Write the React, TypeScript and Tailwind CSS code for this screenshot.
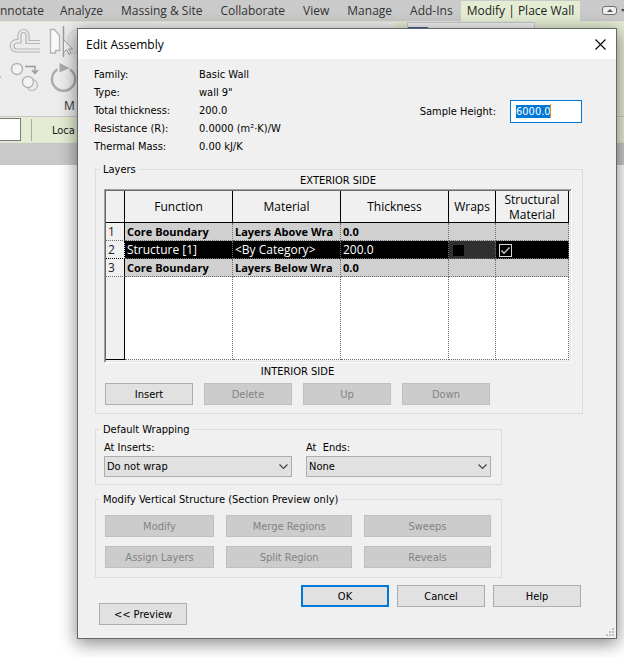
import { useEffect, useRef } from "react";
import type { ReactNode } from "react";

const tabs = ["Analyze", "Massing & Site", "Collaborate", "View", "Manage", "Add-Ins"];

const properties = [
  ["Family:", "Basic Wall"],
  ["Type:", 'wall 9"'],
  ["Total thickness:", "200.0"],
  ["Resistance (R):", "0.0000 (m²·K)/W"],
  ["Thermal Mass:", "0.00 kJ/K"],
];

const layers = [
  { id: 1, fn: "Core Boundary", material: "Layers Above Wra", thickness: "0.0", active: false },
  { id: 2, fn: "Structure [1]", material: "<By Category>", thickness: "200.0", active: true },
  { id: 3, fn: "Core Boundary", material: "Layers Below Wra", thickness: "0.0", active: false },
];

function Button({
  children,
  disabled = false,
  primary = false,
  wide = false,
}: {
  children: ReactNode;
  disabled?: boolean;
  primary?: boolean;
  wide?: boolean;
}) {
  const tone = disabled
    ? "border border-[#bfbfbf] bg-[#cccccc] text-[#838383]"
    : primary
      ? "border-2 border-[#0078d7] bg-[#e1e1e1]"
      : "border border-[#adadad] bg-[#e1e1e1]";
  return (
    <button
      type="button"
      disabled={disabled}
      className={`flex h-[22px] items-center justify-center ${wide ? "w-full" : "w-[88px]"} ${tone}`}
    >
      {children}
    </button>
  );
}

function Group({ title, className, children }: { title: string; className: string; children: ReactNode }) {
  return (
    <fieldset className={`min-w-0 border border-[#dcdcdc] pr-[10px] pl-2 ${className}`}>
      <legend className="-ml-1 px-[3px] leading-[11px]">{title}</legend>
      {children}
    </fieldset>
  );
}

function Select({ id, label, value }: { id: string; label: string; value: string }) {
  return (
    <div>
      <label htmlFor={id} className="block leading-[13px] whitespace-pre">
        {label}
      </label>
      <div className="relative mt-0.5">
        <select
          id={id}
          defaultValue={value}
          className="block h-[21px] w-full appearance-none border border-[#adadad] bg-[#e1e1e1] pl-0.5"
        >
          <option>{value}</option>
        </select>
        <svg className="pointer-events-none absolute top-2 right-1" width="9" height="6" viewBox="0 0 9 6" fill="none">
          <path d="M.5.5 4.5 4.5 8.500.5" stroke="#444" strokeWidth="1.200" />
        </svg>
      </div>
    </div>
  );
}

function RibbonIcons() {
  return (
    <svg className="block" width="78" height="76" viewBox="0 22 78 76" fill="none" stroke="#b4b4b4">
      {/* offset */}
      <path
        d="M40 40.500H29V35a5.500 5.500 0 0 0-11 0v4.500h-1.500a6.200 6.200 0 0 0 0 12.500H40"
        strokeWidth="1.200"
      />
      <path d="M40 43.500H26V35a2.500 2.500 0 0 0-5 0v8h-4a3 3 0 0 0 0 6H40" strokeWidth="1.200" />
      {/* mirror, pick axis */}
      <path d="M50.500 29.500h4l5 6v15h-4v2.500h-5z" fill="#f8f8f8" strokeWidth="1.300" />
      <path d="M63.500 26v31" stroke="#9c9c9c" strokeWidth="1.500" />
      <path d="M78 30h-4l-6 6v13h4v4h6" stroke="#d4d4d4" fill="#e6e6e6" />
      <path d="M63.500 39.500v13l3-3 2.500 5 2-1-2.500-4.500h4z" fill="#f4f4f4" stroke="#a0a0a0" />
      {/* copy */}
      <circle cx="17" cy="69" r="5.500" fill="#f3f3f3" strokeWidth="1.400" />
      <path d="M25 66.500h10V72M32 70l3 3.500 3-3.500" stroke="#999" strokeWidth="1.400" />
      <circle cx="32" cy="85" r="5.500" strokeWidth="1.200" />
      <circle cx="28" cy="82" r="5.500" fill="#f3f3f3" strokeWidth="1.400" />
      {/* rotate */}
      <path d="M70 69.500A11.600 11.600 0 1 1 57.500 69.300" stroke="#ababab" strokeWidth="2.400" />
      <path d="M59.500 63v9.500L69.500 68z" fill="#ababab" stroke="none" />
      <path d="M0 78l1-2" />
    </svg>
  );
}

function LayerTable() {
  const head = "border-r border-b border-black px-0 text-center font-normal leading-[15px]";
  const cell = "overflow-hidden border-r border-b border-dotted border-[#6b6b6b] p-0 pl-0.5 whitespace-nowrap leading-4";
  return (
    <div className="border border-t-[#a0a0a0] border-r-white border-b-white border-l-[#a0a0a0]">
      <div className="border border-t-[#696969] border-r-[#e3e3e3] border-b-[#e3e3e3] border-l-[#696969] pr-px pb-px">
        <table className="w-full table-fixed border-separate border-spacing-0 font-['Open_Sans','Noto_Sans',sans-serif] text-[12px]">
          <colgroup>
            <col className="w-[19px]" />
            <col />
            <col />
            <col />
            <col className="w-[47px]" />
            <col className="w-[73px]" />
          </colgroup>
          <thead>
            <tr className="h-8">
              <th className={head} aria-label="Layer" />
              <th className={head}>Function</th>
              <th className={head}>Material</th>
              <th className={head}>Thickness</th>
              <th className={head}>Wraps</th>
              <th className={head}>Structural Material</th>
            </tr>
          </thead>
          <tbody>
            {layers.map(({ id, fn, material, thickness, active }) => (
              <tr
                key={id}
                className={active ? "h-[18px] bg-black text-white" : "h-[18px] bg-[#d0d0d0] text-[11px] font-bold"}
              >
                <th
                  scope="row"
                  className={`border-r border-b bg-[#f0f0f0] p-0 pl-0.5 text-left text-[12px] leading-4 font-normal text-[#222] ${
                    active ? "border-dotted border-black" : "border-r-black border-b-[#6b6b6b] [border-bottom-style:dotted]"
                  }`}
                >
                  {id}
                </th>
                <td className={cell}>{fn}</td>
                <td className={cell}>{material}</td>
                <td className={cell}>{thickness}</td>
                <td className={`${cell} ${active ? "bg-[#303030]" : ""}`}>
                  {active && (
                    <input
                      type="checkbox"
                      aria-label="Wraps"
                      disabled
                      className="mt-0.5 ml-0.5 block size-[11px] appearance-none bg-black"
                    />
                  )}
                </td>
                <td className={cell}>
                  {active && (
                    <span className="relative mt-0.5 ml-px block size-[13px]">
                      <input
                        type="checkbox"
                        aria-label="Structural material"
                        defaultChecked
                        className="block size-[13px] appearance-none border border-[#d8d8d8] bg-black"
                      />
                      <svg className="pointer-events-none absolute inset-0" width="13" height="13" viewBox="0 0 13 13" fill="none">
                        <path d="M2.500 6.500 5 9.300 10.500 3.500" stroke="#c8c8c8" strokeWidth="1.400" />
                      </svg>
                    </span>
                  )}
                </td>
              </tr>
            ))}
            <tr className="h-[83px] bg-white">
              <td className="border-r border-b border-black bg-[#f0f0f0]" />
              <td className={cell} />
              <td className={cell} />
              <td className={cell} />
              <td className={cell} />
              <td className={cell} />
            </tr>
          </tbody>
        </table>
      </div>
    </div>
  );
}

function Dialog() {
  const height = useRef<HTMLInputElement>(null);
  useEffect(() => {
    height.current?.focus();
    height.current?.select();
  }, []);

  return (
    <section
      role="dialog"
      aria-labelledby="dialog-title"
      className="absolute top-7 right-[7px] left-[77px] border border-[#666666] bg-[#f0f0f0] font-['DejaVu_Sans_Condensed','DejaVu_Sans',sans-serif] text-[11px] leading-[13px] text-black shadow-[0_4px_16px_1px_rgba(0,0,0,0.45)]"
    >
      <header className="flex h-[30px] items-center justify-between bg-white pr-2.5 pl-2">
        <h1 id="dialog-title" className="font-['Open_Sans','Noto_Sans',sans-serif] text-[12px]">
          Edit Assembly
        </h1>
        <button type="button" aria-label="Close" className="block">
          <svg width="11" height="11" viewBox="0 0 11 11" fill="none">
            <path d="M.5.5l10 10M10.500.5l-10 10" stroke="#000" strokeWidth="1.100" />
          </svg>
        </button>
      </header>

      <div className="pt-[7px] pr-[33px] pb-[13px] pl-[17px]">
        <div className="flex items-center justify-between pr-px">
          <dl className="-ml-px grid grid-cols-[105px_auto] leading-[18px]">
            {properties.map(([name, value]) => (
              <div key={name} className="contents">
                <dt>{name}</dt>
                <dd>{value}</dd>
              </div>
            ))}
          </dl>
          <div className="flex items-center">
            <label htmlFor="sample-height">Sample Height:</label>
            <div className="relative ml-3.5">
              <input
                id="sample-height"
                ref={height}
                defaultValue="6000.0"
                className="block h-[23px] w-[72px] border border-[#0078d7] bg-white pl-[5px] outline-none selection:bg-[#0078d7] selection:text-white"
              />
              <span className="absolute top-1 left-10 h-3.5 w-px bg-[#f08a24]" />
            </div>
          </div>
        </div>

        <Group title="Layers" className="mt-2 pb-2">
          <p className="mb-0.5 text-center leading-[12px]">EXTERIOR SIDE</p>
          <LayerTable />
          <div className="ml-px w-fit">
            <p className="mt-[3px] text-center leading-[12px]">INTERIOR SIDE</p>
            <div className="mt-[5px] flex gap-[11px]">
              <Button>Insert</Button>
              <Button disabled>Delete</Button>
              <Button disabled>Up</Button>
              <Button disabled>Down</Button>
            </div>
          </div>
        </Group>

        <Group title="Default Wrapping" className="mt-[10px] w-5/6 pb-[7px]">
          <div className="grid grid-cols-[188px_1fr] gap-x-3.5 pt-1.5">
            <Select id="at-inserts" label="At Inserts:" value="Do not wrap" />
            <Select id="at-ends" label="At  Ends:" value="None" />
          </div>
        </Group>

        <Group title="Modify Vertical Structure (Section Preview only)" className="mt-[9px] w-5/6 pb-[9px]">
          <div className="ml-px grid grid-cols-[109px_1fr_1fr] gap-x-3 gap-y-[9px] pt-2.5">
            <Button disabled wide>Modify</Button>
            <Button disabled wide>Merge Regions</Button>
            <Button disabled wide>Sweeps</Button>
            <Button disabled wide>Assign Layers</Button>
            <Button disabled wide>Split Region</Button>
            <Button disabled wide>Reveals</Button>
          </div>
        </Group>

        <footer className="mt-[7px] flex items-start justify-between pr-0.5 pl-1">
          <div className="pt-[18px]">
            <Button>&lt;&lt; Preview</Button>
          </div>
          <div className="flex gap-2">
            <Button primary>OK</Button>
            <Button>Cancel</Button>
            <Button>Help</Button>
          </div>
        </footer>
      </div>

      <svg className="absolute right-0.5 bottom-0.5" width="8" height="8" viewBox="0 0 8 8" fill="#bfbfbf">
        <path d="M6 0h2v2H6zM3 3h2v2H3zM6 3h2v2H6zM0 6h2v2H0zM3 6h2v2H3zM6 6h2v2H6z" />
      </svg>
    </section>
  );
}

export default function App() {
  return (
    <div className="relative min-h-screen overflow-hidden bg-white font-['Open_Sans','Noto_Sans',sans-serif] text-[12px] text-[#333]">
      <nav className="flex h-[21px] items-stretch bg-[#cacaca] leading-[21px] whitespace-nowrap">
        <button type="button" className="block w-[60px] text-left">
          nnotate
        </button>
        <div className="flex gap-[18px]">
          {tabs.map((tab) => (
            <button key={tab} type="button" className="block">
              {tab}
            </button>
          ))}
        </div>
        <button type="button" className="mt-px ml-2 block bg-[#e4edd3] px-1.5 leading-5 text-[#222]">
          Modify | Place Wall
        </button>
        <div className="ml-auto flex items-center gap-1">
          <button type="button" aria-label="Minimize ribbon" className="flex h-[9px] w-[15px] items-center justify-center rounded-[3px] border border-[#6c6f78] bg-[#eeeeee]">
            <svg width="6" height="3" viewBox="0 0 6 3" fill="#555">
              <path d="M0 3 3 0l3 3z" />
            </svg>
          </button>
          <svg width="3" height="3" viewBox="0 0 3 3" fill="#444">
            <path d="M0 0h3v1L2 3z" />
          </svg>
        </div>
      </nav>
      <div className="flex h-[95px] border-t border-[#dfe6d0] bg-[#e3ecd2]">
        <div className="w-[395px] bg-[#ececec]">
          <RibbonIcons />
          <p className="pl-16 leading-4">M</p>
        </div>
        <div className="ml-3 h-6 w-[128px] border border-[#c4c8cc] bg-[#eeeeee] pt-1">
          <div className="h-3 w-5 bg-[#3a62a0]" />
        </div>
      </div>
      <div className="flex h-[27px] items-center border-y border-t-[#c8c8c8] border-b-[#dfe6d0] bg-[#e4edd3] font-['DejaVu_Sans_Condensed','DejaVu_Sans',sans-serif] text-[11px] text-[#1a1a1a]">
        <input aria-label="Height" className="h-[23px] w-[21px] border border-l-0 border-[#777] bg-white" />
        <span className="ml-2.5 h-[22px] w-px bg-[#a8aaa4]" />
        <span className="ml-5 pt-1">Loca</span>
      </div>
      <div className="h-[22px] bg-[#c9c9c9]" />
      <Dialog />
    </div>
  );
}
